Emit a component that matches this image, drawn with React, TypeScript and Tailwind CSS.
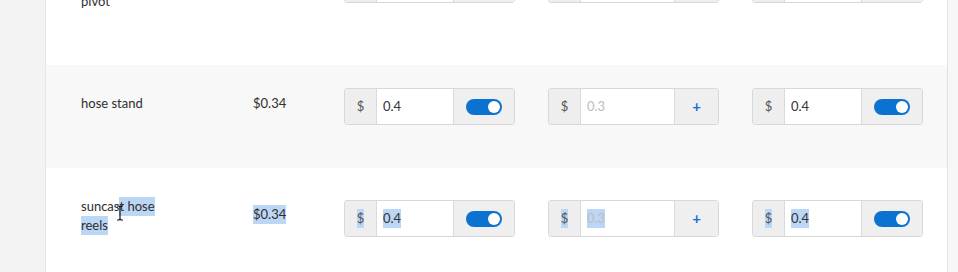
import React from 'react';

const font = { fontFamily: 'Lato, "Open Sans", Arial, sans-serif' };

function Sel({ on, children }: { on?: boolean; children: React.ReactNode }) {
  if (!on) return <>{children}</>;
  return <span className="inline-block bg-[#bcd6f5] leading-[19px]">{children}</span>;
}

function Toggle() {
  return (
    <div className="flex h-[16px] w-[36px] items-center justify-end rounded-full bg-[#0b72cf] pr-[2px]">
      <div className="h-[12px] w-[12px] rounded-full bg-white" />
    </div>
  );
}

function PriceGroup({
  value,
  placeholder,
  action,
  selected,
  inputWidth,
}: {
  value?: string;
  placeholder?: boolean;
  action: 'toggle' | 'plus';
  selected?: boolean;
  inputWidth: string;
}) {
  return (
    <div className="flex h-[37px] w-[171px] overflow-hidden rounded-[3px] border border-[#d8d8d8]">
      <div className="flex w-[32px] items-center justify-center border-r border-[#dadada] bg-[#eeeeee] text-[13px] text-[#555]">
        {value && <Sel on={selected}>$</Sel>}
      </div>
      <div
        className={`flex ${inputWidth} items-center bg-white pl-[6px] text-[13px] ${
          placeholder ? 'text-[#bdbdbd]' : 'text-[#333]'
        }`}
      >
        {value && <Sel on={selected}>{value}</Sel>}
      </div>
      <div className="flex flex-1 items-center justify-center border-l border-[#dadada] bg-[#efefef]">
        {action === 'toggle' ? (
          <Toggle />
        ) : (
          value && <span className="text-[15px] font-bold leading-none text-[#0b72cf]">+</span>
        )}
      </div>
    </div>
  );
}

function Groups({ selected, empty }: { selected?: boolean; empty?: boolean }) {
  return (
    <div className="flex gap-[33px]">
      <PriceGroup value={empty ? undefined : '0.4'} action="toggle" selected={selected} inputWidth="w-[76px]" />
      <PriceGroup value={empty ? undefined : '0.3'} placeholder action="plus" selected={selected} inputWidth="w-[93px]" />
      <PriceGroup value={empty ? undefined : '0.4'} action="toggle" selected={selected} inputWidth="w-[76px]" />
    </div>
  );
}

export default function App() {
  return (
    <div className="flex h-[272px] w-full overflow-hidden bg-[#f3f3f3] text-[#2e2e2e]" style={font}>
      <div className="w-[46px] shrink-0 border-r border-[#e6e6e6]" />
      <div className="flex w-[901px] shrink-0 flex-col bg-white">
        {/* Row 1 (scrolled mostly out of view) */}
        <div className="mt-[-62px] flex h-[127px] shrink-0 items-start pl-[35px]">
          <div className="mt-[54px] w-[172px] text-[13px] leading-[19px]">pivot</div>
          <div className="w-[91px]" />
          <div className="mt-[28px]">
            <Groups empty />
          </div>
        </div>

        {/* Row 2 */}
        <div className="flex h-[103px] shrink-0 items-start bg-[#f8f8f8] pl-[35px]">
          <div className="mt-[29px] w-[172px] text-[13px] leading-[19px]">hose stand</div>
          <div className="mt-[29px] w-[91px] text-[13px] leading-[19px]">$0.34</div>
          <div className="mt-[23px]">
            <Groups />
          </div>
        </div>

        {/* Row 3 */}
        <div className="relative flex flex-1 items-start pl-[35px]">
          <div className="mt-[29px] w-[172px] text-[13px] leading-[19px]">
            <div>
              suncas<Sel on>t hose</Sel>
            </div>
            <div>
              <Sel on>reels</Sel>
            </div>
          </div>
          <div className="mt-[37px] w-[91px] text-[13px] leading-[19px]">
            <Sel on>$0.34</Sel>
          </div>
          <div className="mt-[32px]">
            <Groups selected />
          </div>
          {/* text cursor */}
          <svg
            className="absolute left-[70px] top-[37px]"
            width="8"
            height="16"
            viewBox="0 0 8 16"
          >
            <path d="M1 1h2l1 1 1-1h2M4 2v12M1 15h2l1-1 1 1h2" stroke="#111" strokeWidth="1.2" fill="none" />
          </svg>
        </div>
      </div>
      <div className="flex-1 border-l border-[#e2e2e2] bg-[#f7f7f7]" />
    </div>
  );
}
